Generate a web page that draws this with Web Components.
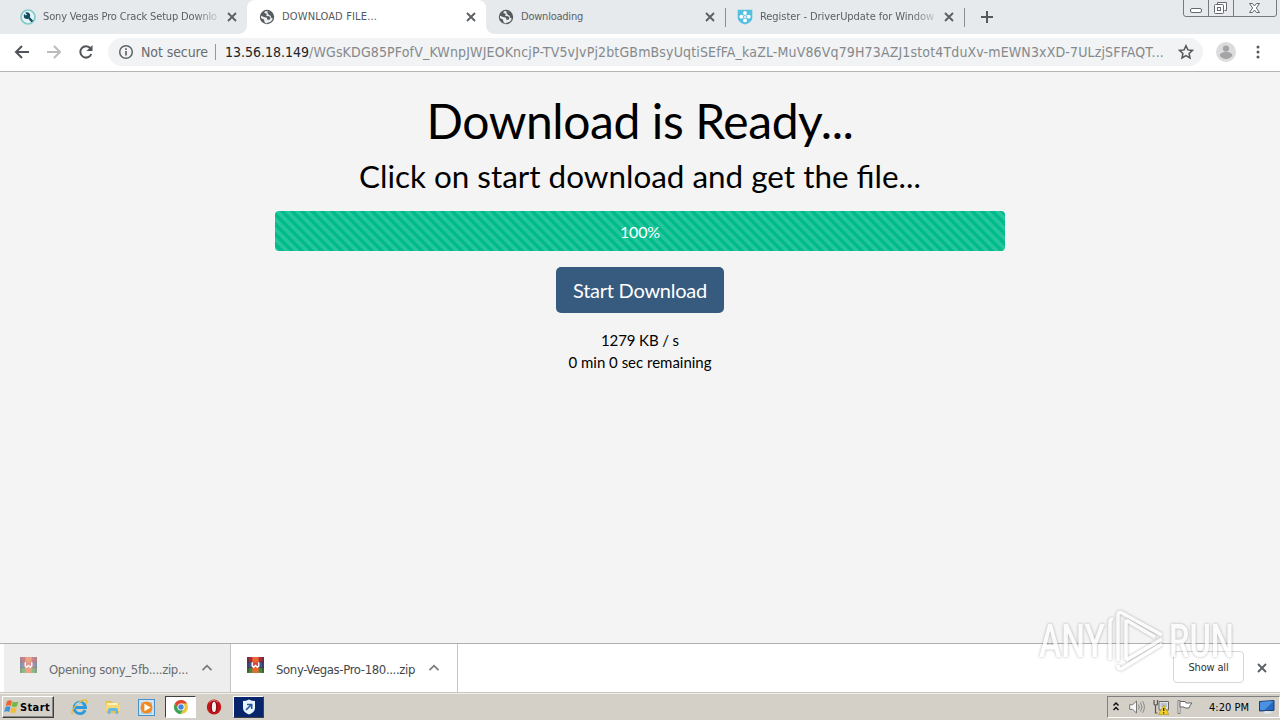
<!DOCTYPE html>
<html lang="en">
<head>
    <meta charset="UTF-8">
    <meta name="viewport" content="width=device-width, initial-scale=1.0">
    <title>DOWNLOAD FILE...</title>
    <style>
        html, body { margin: 0; height: 100%; overflow: hidden; }
        body { font-family: "DejaVu Sans Condensed", "DejaVu Sans", sans-serif; }
    </style>
</head>
<body>
    <desktop-screen></desktop-screen>

    <script>
        // Text that fills a given width by letter spacing, or by font size when "scale" is set (keeps ligatures)
        class FitText extends HTMLElement {
            constructor() {
                super();
                this.attachShadow({ mode: "open" });
                this.shadowRoot.innerHTML = `<style>
                        :host { display: inline-block; white-space: nowrap; flex: none; vertical-align: top; }
                        span { display: inline-block; vertical-align: top; }
                    </style><span><slot></slot></span>`;
            }
            connectedCallback() {
                const target = Number(this.getAttribute("w"));
                const span = this.shadowRoot.querySelector("span");
                const natural = span.getBoundingClientRect().width;
                const count = this.textContent.length;
                this.style.width = target + "px";
                if (this.hasAttribute("scale")) {
                    span.style.fontSize = parseFloat(getComputedStyle(span).fontSize) * target / natural + "px";
                } else {
                    span.style.letterSpacing = (target - natural) / count + "px";
                }
            }
        }
        customElements.define("fit-text", FitText);

        const ICONS = {
            search: `<circle cx="8" cy="8" r="7" fill="#e6f4f4" stroke="#83cbcb" stroke-width="1.7"/><circle cx="7" cy="6.8" r="3.2" fill="#174b63"/><path d="M7 3.5v3L5 7M9 9l3.4 3.5" stroke="#174b63" stroke-width="2.4"/><path d="M4 3.8l2.4 2.2" stroke="#e6f4f4" stroke-width="1.6"/>`,
            globe: `<circle cx="8" cy="8" r="7.2" fill="#565b60"/><path d="M6.6 1.9L5.1 3.8l2.7 1.1-.6 2.2 3 .2 1.3 1.6-1 1.9H8.3L8 8.8 4.9 8 2.1 6.8 1.9 9l3 1.5.8 3 2.1 1 .8-.8c2.7-.1 4.4-1.5 5.2-4.1l-1.4-.6-1-2.4 1-1.8-2-2.2z" fill="#eceef0"/><path d="M8.500 1.500l3.800 1.700 2.200 4.500-2-.6-2.500-1.200-1.500-2z" fill="#565b60"/>`,
            shield: `<path d="M.7.7h14.6v8.1c0 3.5-3.3 5.6-7.3 6.7C4 14.400.7 12.300.7 8.800z" fill="#55bfe1"/><g fill="#fff"><circle cx="8" cy="4" r="1.9"/><circle cx="8" cy="11.400" r="1.900"/><circle cx="4.300" cy="7.700" r="1.900"/><circle cx="11.700" cy="7.700" r="1.900"/></g><path d="M6.500 6.200l3 3M9.500 6.200l-3 3" stroke="#fff"/>`,
            close: `<path d="M4 4l8 8M12 4l-8 8" stroke="#5b6065" stroke-width="1.9"/>`,
            plus: `<path d="M8 2v12M2 8h12" stroke="#55595e" stroke-width="2"/>`,
            back: `<path d="M15 8H2M8 2L2 8l6 6" fill="none" stroke="#505357" stroke-width="2"/>`,
            forward: `<path d="M1 8h13M8 2l6 6-6 6" fill="none" stroke="#b9bbbd" stroke-width="2"/>`,
            reload: `<path d="M13.300 10a5.700 5.700 0 1 1-.8-5.600" fill="none" stroke="#505357" stroke-width="2"/><path d="M14.500 1v6h-6z" fill="#505357"/>`,
            info: `<circle cx="8" cy="8" r="6.300" fill="none" stroke="#5f6368" stroke-width="1.500"/><path d="M8 7v4.600M8 4.200v1.700" stroke="#5f6368" stroke-width="1.700"/>`,
            star: `<path d="M8 1.700l1.900 4.200 4.600.5-3.400 3.100.9 4.500L8 11.700 4 14l.9-4.500L1.500 6.400l4.600-.5z" fill="none" stroke="#54585c" stroke-width="1.500"/>`,
            avatar: `<circle cx="8" cy="8" r="8" fill="#dcdcdd"/><circle cx="8" cy="5.200" r="2.500" fill="#a3a4a6"/><path d="M3 11c0-2.100 2-3 5-3s5 .9 5 3c-1 1.600-2.800 2.500-5 2.500S4 12.600 3 11z" fill="#a3a4a6"/>`,
            dots: `<g fill="#55585c"><circle cx="8" cy="3" r="1.500"/><circle cx="8" cy="8" r="1.500"/><circle cx="8" cy="13" r="1.500"/></g>`,
            caret: `<path d="M3.500 10.200L8 5.700l4.500 4.500" fill="none" stroke="#77797c" stroke-width="1.700"/>`,
            rar: `<path fill="#a72c43" d="M0 0h16v5H0z"/><path fill="#36589d" d="M0 5h16v5H0z"/><path fill="#3f8a3a" d="M0 10h16v5H0z"/><path d="M0 5h16M0 10h16M1 0v15M15 0v15" stroke="#3b2b2b" stroke-width=".8"/><path fill="#e66a32" d="M5 0h6v15H5z"/><path fill="#d94840" d="M4 5h8v5H4z"/><path d="M5 5v3.500l1.300 1.200L8 8l1.700 1.700L11 8.500V5" fill="none" stroke="#fff" stroke-width="1.300"/>`,
            windows: `<path d="M3 2q3-1.500 5 0L6.800 7Q4.500 5.500 1.700 7z" fill="#ed6533"/><path d="M8.800 2.400q2.500 1.500 5.500 0L13 7.300q-3 1.300-5.400 0z" fill="#72b944"/><path d="M1.500 8q2.600-1.500 5 0L5.200 13Q3 11.700.2 13z" fill="#3e93da"/><path d="M7.400 8.300q2.600 1.400 5.400 0l-1.200 5q-2.900 1.300-5.400 0z" fill="#f2be38"/>`,
            ie: `<path d="M13.300 10.500A5.400 5.400 0 1 1 13.700 8H4" fill="none" stroke="#2f9adb" stroke-width="2.600"/><path d="M1.200 14.500C-.8 10 9.500-.5 14.300 1.200c1 .6.700 2-.1 3.400" fill="none" stroke="#e7bd38" stroke-width="1.300"/><path d="M4 6c1.200-2.300 4.500-3 6.500-1" fill="none" stroke="#a4dcf8"/>`,
            folder: `<path d="M1 2h6l1 2h6v10H1z" fill="#e7bf54"/><path d="M2 4h11v6H2z" fill="#fbf3b5"/><path d="M1 6h14v6H1z" fill="#f5d877"/><path d="M3 15v-4q0-2 2-2h6q2 0 2 2v4h-2.500v-3h-5v3z" fill="#65b9e3"/>`,
            media: `<path d="M.5.500h15v15H.5z" fill="#d3e5f4" stroke="#4a91cb"/><path d="M3 3h10v11H3z" fill="#9ec9e8"/><circle cx="8" cy="8" r="5.600" fill="#f18a1d"/><path d="M6 4.500v7L12 8z" fill="#fff"/>`,
            chrome: `<circle cx="8" cy="8" r="7" fill="#e8c83b"/><path d="M1.900 4.500A7 7 0 0 1 14.100 4.500H8L5 10z" fill="#dc4738"/><path d="M1.900 4.500A7 7 0 0 0 7.500 15l3.500-5.200H5z" fill="#3ca45a"/><circle cx="8" cy="8" r="3.600" fill="#fff"/><circle cx="8" cy="8" r="2.700" fill="#4684dc"/>`,
            opera: `<ellipse cx="8" cy="8" rx="7.200" ry="7.500" fill="#c3161c"/><ellipse cx="8" cy="8" rx="3.700" ry="6" fill="#8e080d"/><ellipse cx="8" cy="8" rx="2.100" ry="5.200" fill="#f5eeee"/><path d="M3 3.500Q7-.5 12 3" fill="none" stroke="#e67270"/>`,
            badge: `<path d="M2 2Q5 2 8 .5 11 2 14 2v7q0 4-6 6.500Q2 13 2 9z" fill="#e8f5ff"/><path d="M5 11l5-5M6 5.500h4.700V10" fill="none" stroke="#25569b" stroke-width="1.600"/>`,
            chevrons: `<path d="M5.500 6.500L8 4l2.500 2.500M5.500 11L8 8.500l2.500 2.500" fill="none" stroke="#111" stroke-width="1.500"/>`,
            speaker: `<path d="M.7 5.700h3L7.500 2v12L3.700 10.400h-3z" fill="#f8f8f8" stroke="#777"/><path d="M9.500 5.500q1.700 2.500 0 5M11.500 3.500q3 4.500 0 9M13.600 2.200q3.600 5.800 0 11.600" fill="none" stroke="#888"/>`,
            network: `<path d="M1 1v4q0 1 1.500 1v8h2M4.500 1v4q0 1-1.500 1" fill="none" stroke="#555" stroke-width="1.200"/><path d="M6 2.500h9.500V11H6z" fill="#e3e3e3" stroke="#666"/><path d="M7.500 4h6.500v4H7.500z" fill="#b9c4cc"/><path d="M10.800 6l5 9.500H5.500z" fill="#f4d323" stroke="#a58b19" stroke-width=".6"/><path d="M10.700 9v3M10.700 13.200v1.300" stroke="#222" stroke-width="1.300"/>`,
            flag: `<path d="M1 1.500h2v13H1z" fill="#fff" stroke="#666" stroke-width=".8"/><path d="M3 2.500h5l1 1.500h6q-2 2-3 5H8L7 8H3z" fill="#fff" stroke="#666"/>`,
            monitor: `<path d="M.5 2.500l14.500-1v9.800L.5 12z" fill="#2769c2" stroke="#173c77"/><path d="M1 3l13.500-1-9 9H1z" fill="#4b91df"/><path d="M6 12h5l2 2.500H4z" fill="#dfe5ed"/>`
        };

        class AppIcon extends HTMLElement {
            connectedCallback() {
                const size = this.getAttribute("size") || 16;
                this.attachShadow({ mode: "open" });
                this.shadowRoot.innerHTML = `
                    <style>
                        :host { display: block; flex: none; width: ${size}px; height: ${size}px; }
                        svg { display: block; }
                    </style>
                    <svg width="${size}" height="${size}" viewBox="0 0 16 16">${ICONS[this.getAttribute("name")]}</svg>`;
            }
        }
        customElements.define("app-icon", AppIcon);

        class BrowserTab extends HTMLElement {
            connectedCallback() {
                this.attachShadow({ mode: "open" });
                this.shadowRoot.innerHTML = `
                    <style>
                        :host { display: flex; align-items: center; box-sizing: border-box; width: 239px; height: 34px;
                            padding: 0 7px 0 12px; flex: none; font-size: 11px; color: #5b6065; position: relative; }
                        :host([active]) { background: #fff; border-radius: 8px 8px 0 0; color: #55595e; }
                        :host([active])::before, :host([active])::after { content: ""; position: absolute; bottom: 0; width: 8px; height: 8px; }
                        :host([active])::before { left: -8px; background: radial-gradient(circle at 0 0, #e7eaed 7.5px, #fff 8px); }
                        :host([active])::after { right: -8px; background: radial-gradient(circle at 100% 0, #e7eaed 7.5px, #fff 8px); }
                        .title { width: 174px; margin-left: 7px; margin-right: 7px; line-height: 16px; overflow: hidden; }
                        :host([fade]) .title { -webkit-mask-image: linear-gradient(to right, #000 152px, rgba(0,0,0,.25)); }
                        i { width: 1px; height: 19px; background: #898d91; position: absolute; right: -1px; top: 8px; }
                        :host(:not([divider])) i { display: none; }
                    </style>
                    <app-icon name="${this.getAttribute("icon")}"></app-icon>
                    <div class="title"><slot></slot></div>
                    <app-icon name="close"></app-icon><i></i>`;
            }
        }
        customElements.define("browser-tab", BrowserTab);

        class WindowControls extends HTMLElement {
            connectedCallback() {
                this.attachShadow({ mode: "open" });
                this.shadowRoot.innerHTML = `
                    <style>
                        :host { display: block; width: 94px; height: 17px; margin: 0 3px 0 auto; align-self: flex-start; }
                        svg { display: block; }
                    </style>
                    <svg width="94" height="17" fill="none" stroke="#777a7d">
                        <path d="M.5 0v14q0 2.500 2.500 2.500h88q2.500 0 2.500-2.500V0M25.500 0v16M50.500 0v16"/>
                        <g stroke="#65696d"><rect x="7.500" y="8.500" width="11" height="4" rx="1.500" fill="#fff"/>
                        <path d="M34.500 4.500v-2h9v8h-2" fill="#fff"/><rect x="31.500" y="4.500" width="9" height="9" rx="1" fill="#fff"/><rect x="34.500" y="7.500" width="3" height="3"/>
                        <path d="M66.500 3.500h3l2 2.500 2-2.500h3l-3.200 4.500 3.200 4.500h-3l-2-2.500-2 2.500h-3l3.200-4.500z" fill="#fff"/></g>
                    </svg>`;
            }
        }
        customElements.define("window-controls", WindowControls);

        class BrowserToolbar extends HTMLElement {
            connectedCallback() {
                this.attachShadow({ mode: "open" });
                this.shadowRoot.innerHTML = `
                    <style>
                        :host { display: flex; align-items: center; height: 38px; box-sizing: border-box; padding: 0 14px 1px; gap: 16px; background: #fff; border-bottom: 1px solid #b3b5b3; flex: none; }
                        .bar { display: flex; align-items: center; width: 1095px; height: 28px; border-radius: 14px; background: #f1f3f4;
                            box-sizing: border-box; padding-left: 10px; font-size: 14px; color: #686c70; margin-left: -2px; margin-right: -1px; }
                        .state { margin-left: 7px; }
                        i { width: 1px; height: 16px; background: #96999c; margin: 0 9px 0 7px; }
                        .ip { color: #222427; }
                        .path { color: #85898c; }
                        .bar app-icon:last-child { margin-left: 14px; }
                    </style>
                    <app-icon name="back"></app-icon>
                    <app-icon name="forward"></app-icon>
                    <app-icon name="reload"></app-icon>
                    <div class="bar">
                        <app-icon name="info"></app-icon>
                        <fit-text class="state" w="67">Not secure</fit-text><i></i>
                        <fit-text class="ip" w="84">13.56.18.149</fit-text><fit-text class="path" w="855">/WGsKDG85PFofV_KWnpJWJEOKncjP-TV5vJvPj2btGBmBsyUqtiSEfFA_kaZL-MuV86Vq79H73AZJ1stot4TduXv-mEWN3xXD-7ULzjSFFAQT...</fit-text>
                        <app-icon name="star"></app-icon>
                    </div>
                    <app-icon name="avatar" size="20" style="margin-left:-2px"></app-icon>
                    <app-icon name="dots" style="margin-left:-2px"></app-icon>`;
            }
        }
        customElements.define("browser-toolbar", BrowserToolbar);

        class ProgressBar extends HTMLElement {
            connectedCallback() {
                this.attachShadow({ mode: "open" });
                this.shadowRoot.innerHTML = `
                    <style>
                        :host { display: flex; align-items: center; justify-content: center; width: 730px; height: 40px; border-radius: 4px;
                            color: #fff; font-size: 16px; background-color: #00bc8c;
                            background-image: linear-gradient(45deg, rgba(255,255,255,.15) 25%, transparent 25%, transparent 50%, rgba(255,255,255,.15) 50%, rgba(255,255,255,.15) 75%, transparent 75%, transparent);
                            background-size: 10px 10px; }
                    </style>
                    <slot></slot>`;
            }
        }
        customElements.define("progress-bar", ProgressBar);

        class DownloadPage extends HTMLElement {
            connectedCallback() {
                this.attachShadow({ mode: "open" });
                this.shadowRoot.innerHTML = `
                    <style>
                        :host { display: flex; flex-direction: column; align-items: center; height: 571px; flex: none; background: #f4f4f4; color: #000; font-family: Lato, sans-serif; }
                        h1, h2, p { margin: 0; font-weight: 400; }
                        h1 { font-size: 48px; line-height: 58px; margin-top: 20px; }
                        h2 { font-size: 34px; line-height: 40px; margin: 6px 0 15px; }
                        button { width: 168px; height: 46px; margin: 16px 0; padding: 0; border: 0; border-radius: 5px; background: #375a7f; color: #fff; font: 20px Lato, sans-serif; }
                        p { font-size: 15px; line-height: 22px; }
                    </style>
                    <h1><fit-text w="427">Download is Ready...</fit-text></h1>
                    <h2><fit-text scale w="562">Click on start download and get the file...</fit-text></h2>
                    <progress-bar><fit-text w="40">100%</fit-text></progress-bar>
                    <button><fit-text w="134">Start Download</fit-text></button>
                    <p><fit-text w="78">1279 KB / s</fit-text></p>
                    <p><fit-text w="143">0 min 0 sec remaining</fit-text></p>`;
            }
        }
        customElements.define("download-page", DownloadPage);

        class DownloadItem extends HTMLElement {
            connectedCallback() {
                this.attachShadow({ mode: "open" });
                this.shadowRoot.innerHTML = `
                    <style>
                        :host { display: flex; align-items: center; box-sizing: border-box; width: 227px; height: 48px; padding: 0 15px 0 16px;
                            border-right: 1px solid #c4c4c4; font-size: 13px; color: #44474a; }
                        :host([opening]) { background: #eee; color: #6a6c6e; }
                        :host([opening]) .file { opacity: .55; }
                        .file { margin: -5px 12px 0 0; }
                        .name { flex: 1; padding-top: 3px; }
                    </style>
                    <app-icon class="file" name="rar" size="17"></app-icon>
                    <div class="name"><slot></slot></div>
                    <app-icon name="caret"></app-icon>`;
            }
        }
        customElements.define("download-item", DownloadItem);

        class DownloadShelf extends HTMLElement {
            connectedCallback() {
                this.attachShadow({ mode: "open" });
                this.shadowRoot.innerHTML = `
                    <style>
                        :host { display: flex; align-items: center; box-sizing: border-box; height: 49px; padding: 0 10px 0 4px; background: #fff; border-top: 1px solid #b0b0b0; flex: none; }
                        button { box-sizing: border-box; width: 71px; height: 32px; margin: -2px 10px 0 auto; padding: 0; border: 1px solid #d5d7d9; border-radius: 4px; background: #fff; color: #333; font: inherit; font-size: 11px; }
                    </style>
                    <download-item opening><fit-text w="139">Opening sony_5fb....zip...</fit-text></download-item>
                    <download-item><fit-text w="139">Sony-Vegas-Pro-180....zip</fit-text></download-item>
                    <button><fit-text w="40">Show all</fit-text></button>
                    <app-icon name="close"></app-icon>`;
            }
        }
        customElements.define("download-shelf", DownloadShelf);

        class TaskBar extends HTMLElement {
            connectedCallback() {
                this.attachShadow({ mode: "open" });
                this.shadowRoot.innerHTML = `
                    <style>
                        :host { display: flex; align-items: center; box-sizing: border-box; height: 28px; padding: 1px 0 0 2px; background: #d4d0c8; border-top: 1px solid #c9c6c0; box-shadow: inset 0 1px #f2f0ec; flex: none; font-size: 11px; color: #000; }
                        .start, .app { display: flex; align-items: center; box-sizing: border-box; height: 22px; border: 1px solid; }
                        .start { width: 52px; padding-left: 1px; border-color: #fff #404040 #404040 #fff; box-shadow: inset -1px -1px #888; font-weight: 700; }
                        .quick { display: flex; align-items: center; gap: 17px; margin-left: 17px; }
                        .app { width: 31px; justify-content: center; }
                        .current { background: #fff; border-color: #404040 #fff #fff #404040; margin: 0 10px 0 10px; }
                        .blue { background: #08246b; border-color: #fff #404040 #404040 #fff; margin-left: 11px; }
                        .tray { display: flex; align-items: center; box-sizing: border-box; width: 173px; height: 22px; margin-left: auto; border: 1px solid; border-color: #808080 #fff #fff #808080; }
                        .tray app-icon { margin-right: 8px; }
                        .tray app-icon:first-child { margin-right: 5px; }
                        .tray fit-text { margin: 0 10px 0 8px; }
                    </style>
                    <div class="start"><app-icon name="windows"></app-icon><fit-text w="30">Start</fit-text></div>
                    <div class="quick"><app-icon name="ie" size="17"></app-icon><app-icon name="folder"></app-icon><app-icon name="media" size="17"></app-icon></div>
                    <div class="app current"><app-icon name="chrome"></app-icon></div>
                    <app-icon name="opera"></app-icon>
                    <div class="app blue"><app-icon name="badge"></app-icon></div>
                    <div class="tray">
                        <app-icon name="chevrons"></app-icon><app-icon name="speaker"></app-icon><app-icon name="network"></app-icon><app-icon name="flag"></app-icon>
                        <fit-text w="40">4:20 PM</fit-text><app-icon name="monitor"></app-icon>
                    </div>`;
            }
        }
        customElements.define("task-bar", TaskBar);

        // Translucent logo floating over the bottom right corner
        class RunWatermark extends HTMLElement {
            connectedCallback() {
                this.attachShadow({ mode: "open" });
                this.shadowRoot.innerHTML = `
                    <style>
                        :host { display: block; position: absolute; left: 1032px; top: 602px; pointer-events: none; }
                        svg { display: block; filter: drop-shadow(0 0 1.500px rgba(0,0,0,.4)); opacity: .72; }
                        text { font: 500 46px Roboto, sans-serif; }
                    </style>
                    <svg width="210" height="76" fill="#fff">
                        <text x="7" y="55" textLength="66" lengthAdjust="spacingAndGlyphs">ANY</text>
                        <text x="137" y="55" textLength="65" lengthAdjust="spacingAndGlyphs">RUN</text>
                        <path d="M78 58V20q0-3 3-3M86 59V13q0-4 4-2l40 22M94 18v40M94 18l29 17M130 37L94 58M130 42L91 66q-5 3-5-3" fill="none" stroke="#fff" stroke-width="3.500"/>
                    </svg>`;
            }
        }
        customElements.define("run-watermark", RunWatermark);

        class DesktopScreen extends HTMLElement {
            connectedCallback() {
                this.attachShadow({ mode: "open" });
                this.shadowRoot.innerHTML = `
                    <style>
                        :host { display: flex; flex-direction: column; width: 1280px; height: 720px; overflow: hidden; position: relative; }
                        .strip { display: flex; align-items: center; height: 34px; padding-left: 8px; background: #e7eaed; flex: none; }
                        .strip > app-icon { margin-left: 15px; }
                    </style>
                    <div class="strip">
                        <browser-tab icon="search" fade><fit-text w="174">Sony Vegas Pro Crack Setup Downlo</fit-text></browser-tab>
                        <browser-tab icon="globe" active><fit-text w="95">DOWNLOAD FILE...</fit-text></browser-tab>
                        <browser-tab icon="globe" divider><fit-text w="62">Downloading</fit-text></browser-tab>
                        <browser-tab icon="shield" divider fade><fit-text w="174">Register - DriverUpdate for Window</fit-text></browser-tab>
                        <app-icon name="plus"></app-icon>
                        <window-controls></window-controls>
                    </div>
                    <browser-toolbar></browser-toolbar>
                    <download-page></download-page>
                    <download-shelf></download-shelf>
                    <task-bar></task-bar>
                    <run-watermark></run-watermark>`;
            }
        }
        customElements.define("desktop-screen", DesktopScreen);
    </script>
</body>
</html>
